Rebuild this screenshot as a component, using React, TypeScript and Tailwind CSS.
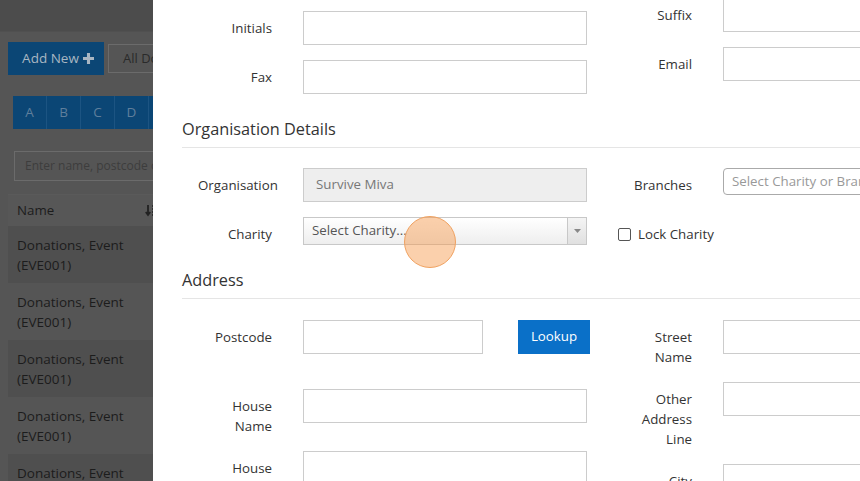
import type { ReactNode } from 'react'

interface FieldProps {
  label: ReactNode
  children: ReactNode
  className?: string
}

function Field({ label, children, className = '' }: FieldProps) {
  return (
    <div className={`flex items-start ${className}`}>
      <label className="ml-4 w-[74px] shrink-0 pt-[7px] text-right leading-5 whitespace-nowrap">{label}</label>
      <div className="ml-[31px]">{children}</div>
    </div>
  )
}

function TextInput({ className = 'w-[284px]' }: { className?: string }) {
  return <input className={`h-[34px] border border-[#ccc] bg-white px-3 outline-none ${className}`} />
}

function SectionTitle({ children }: { children: ReactNode }) {
  return (
    <h3 className="mt-[10px] border-b border-[#e5e5e5] pb-2 text-[16.3px] leading-5 text-[#333]">
      {children}
    </h3>
  )
}

const rows = [0, 1, 2, 3, 4]

function BackgroundList() {
  return (
    <aside className="w-[153px] shrink-0 overflow-hidden bg-[#555] text-[#1c1c1c]">
      <div className="h-[32px] border-b border-[#505050] bg-[#4c4c4c]" />

      <div className="mt-[10px] flex items-center gap-1 pl-2 whitespace-nowrap">
        <button className="flex h-[33px] w-[96px] shrink-0 items-center justify-center gap-1 bg-[#0b4675] pl-1 text-[13.5px] text-[#a9b6c2]">
          Add New
          <svg width="11" height="11" viewBox="0 0 10 10">
            <path d="M3.6 0h2.8v3.6H10v2.8H6.4V10H3.6V6.4H0V3.6h3.6z" fill="#a9b6c2" />
          </svg>
        </button>
        <div className="flex h-[29px] w-[80px] shrink-0 items-center border border-[#6b6b6b] pl-[14px] text-[13px] text-[#2a2a2a]">
          All Donors
        </div>
      </div>

      <div className="mt-[21px] ml-[13px] flex h-[33px] w-[200px] bg-[#0b4675] text-[13.5px] text-[#5f7f9c]">
        {['A', 'B', 'C', 'D', 'E'].map((l) => (
          <div key={l} className="flex w-[34px] shrink-0 items-center justify-center border-r border-[#1c5482]">
            {l}
          </div>
        ))}
      </div>

      <div className="mt-[22px] ml-[14px] flex h-[30px] w-[200px] items-center border border-[#6b6b6b] pl-[10px] text-[12px] whitespace-nowrap text-[#3d3d3d]">
        Enter name, postcode or reference
      </div>

      <div className="mt-[13px] ml-2">
        <div className="flex h-[32px] items-center justify-between border-t border-[#5a5a5a] bg-[#575757] pl-[9px] text-[13.3px]">
          <span>Name</span>
          <svg width="12" height="13" viewBox="0 0 12 13" className="mr-[-4px]">
            <path d="M3 1v9M0.8 8l2.2 3 2.2-3" stroke="#222" strokeWidth="1.8" fill="none" />
            <path d="M7 2h5M7 5h5M7 8h5M7 11h5" stroke="#222" strokeWidth="1.6" />
          </svg>
        </div>
        {rows.map((r) => (
          <div
            key={r}
            className={`h-[57px] pt-[9px] pl-[9px] text-[13.5px] leading-5 ${r % 2 === 0 ? 'bg-[#4f4f4f]' : 'bg-[#555]'}`}
          >
            Donations, Event
            <br />
            (EVE001)
          </div>
        ))}
      </div>
    </aside>
  )
}

export default function App() {
  return (
    <div className="flex h-[481px] w-[860px] overflow-hidden font-['Open_Sans',sans-serif] text-[13.3px] text-[#333]">
      <BackgroundList />

      <main className="relative flex-1 overflow-hidden bg-white pt-[11px] pl-[29px]">
        {/* contact rows */}
        <div className="flex items-start">
          <div className="w-[420px] shrink-0">
            <Field label="Initials" className="mb-[15px]">
              <TextInput />
            </Field>
            <Field label="Fax" className="mb-[15px]">
              <TextInput />
            </Field>
          </div>
          <div className="-mt-[13px] shrink-0">
            <Field label="Suffix" className="mb-[15px]">
              <TextInput />
            </Field>
            <Field label="Email" className="mb-[15px]">
              <TextInput />
            </Field>
          </div>
        </div>

        <SectionTitle>Organisation Details</SectionTitle>

        <div className="mt-[20px] flex items-start">
          <div className="w-[420px] shrink-0">
            <Field label="Organisation" className="mb-[15px]">
              <div className="flex h-[34px] w-[284px] items-center border border-[#ccc] bg-[#eee] pl-3 text-[#777]">
                Survive Miva
              </div>
            </Field>
            <Field label="Charity" className="mb-[15px]">
              <div className="flex h-[28px] w-[284px] items-stretch border border-[#c8c8c8] bg-gradient-to-b from-white to-[#eee]">
                <span className="flex flex-1 items-center pl-2 text-[#555]">Select Charity...</span>
                <span className="flex w-[19px] items-center justify-center border-l border-[#c8c8c8] bg-gradient-to-b from-[#f4f4f4] to-[#e0e0e0]">
                  <svg width="7" height="4" viewBox="0 0 7 4">
                    <path d="M0 0h7L3.5 4z" fill="#888" />
                  </svg>
                </span>
              </div>
            </Field>
          </div>
          <div className="shrink-0">
            <Field label="Branches" className="mb-[22px]">
              <div className="flex h-[27px] w-[284px] items-center rounded-[4px] border border-[#aaa] pl-2 text-[#999]">
                Select Charity or Branches
              </div>
            </Field>
            <div className="ml-4 flex items-center gap-[7px] pt-[7px] leading-5">
              <span className="h-[13px] w-[13px] rounded-[2px] border border-[#555] bg-white" />
              Lock Charity
            </div>
          </div>
        </div>

        <SectionTitle>Address</SectionTitle>

        <div className="mt-[21px] flex items-start">
          <div className="w-[420px] shrink-0">
            <Field label="Postcode" className="mb-[35px]">
              <div className="flex items-start">
                <TextInput className="w-[180px]" />
                <button className="ml-[35px] h-[34px] w-[72px] bg-[#0a70c8] text-white">Lookup</button>
              </div>
            </Field>
            <Field
              label={
                <>
                  House
                  <br />
                  Name
                </>
              }
              className="mb-[15px]"
            >
              <TextInput />
            </Field>
            <Field
              label={
                <>
                  House
                  <br />
                  Number
                </>
              }
              className="mb-[15px]"
            >
              <TextInput />
            </Field>
          </div>
          <div className="shrink-0">
            <Field
              label={
                <>
                  Street
                  <br />
                  Name
                </>
              }
              className="mb-[15px]"
            >
              <TextInput />
            </Field>
            <Field
              label={
                <>
                  Other
                  <br />
                  Address
                  <br />
                  Line
                </>
              }
              className="mb-[15px]"
            >
              <TextInput />
            </Field>
            <Field label="City" className="mb-[15px]">
              <TextInput />
            </Field>
          </div>
        </div>

        {/* click marker */}
        <div className="absolute top-[216px] left-[251px] h-[52px] w-[52px] rounded-full border border-[#f0a261] bg-[rgba(246,150,70,0.45)]" />
      </main>
    </div>
  )
}
